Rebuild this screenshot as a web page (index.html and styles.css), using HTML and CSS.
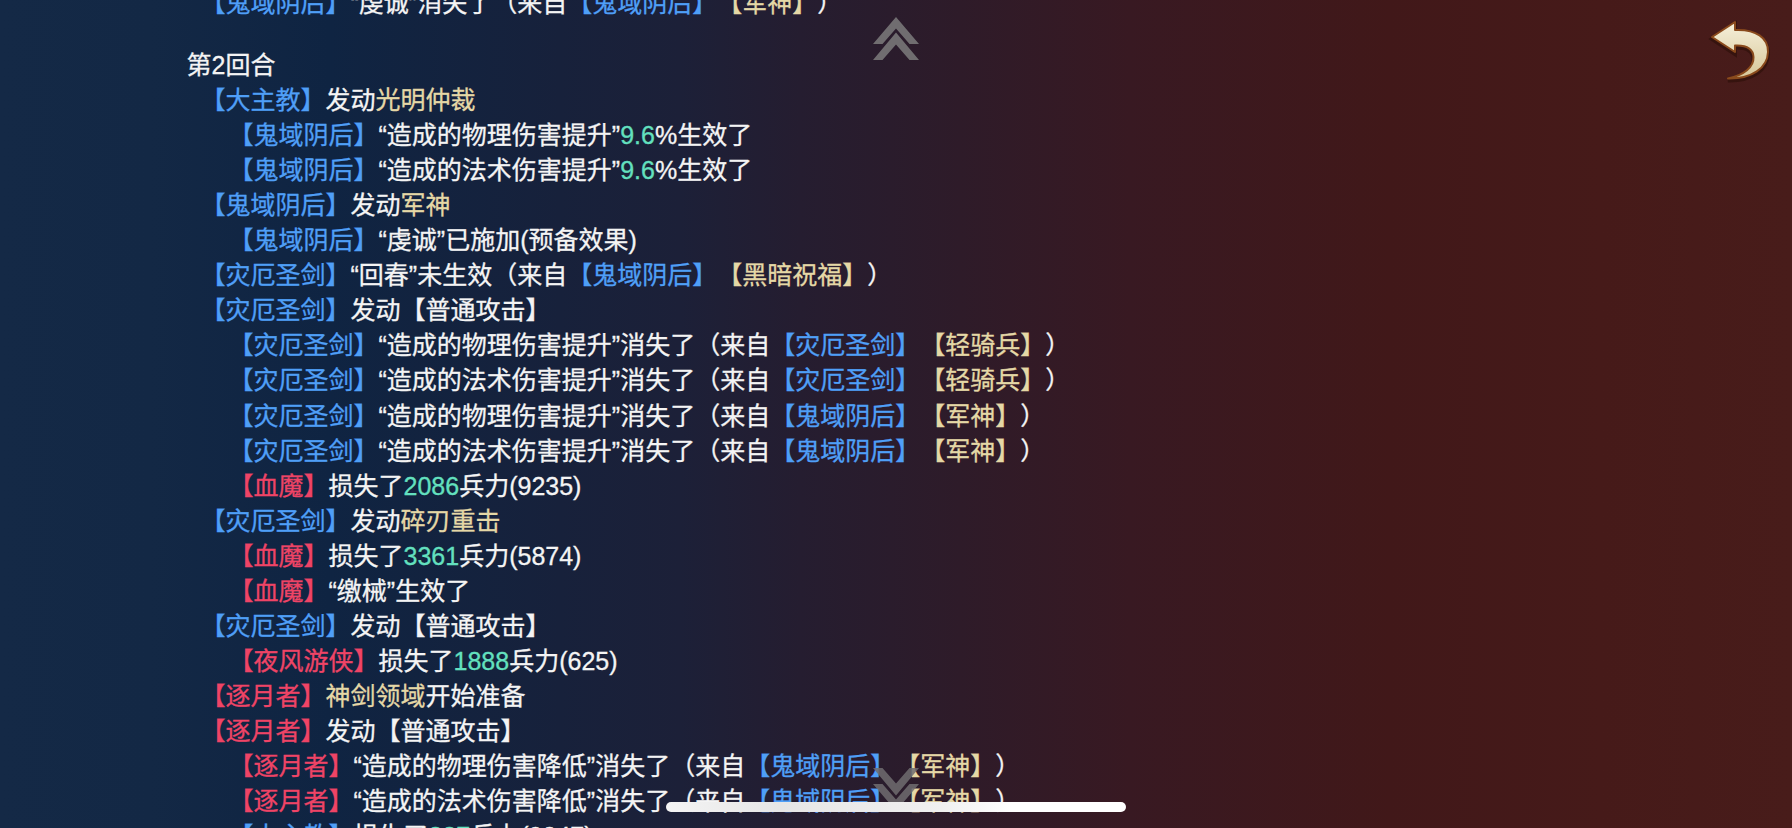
FILE: index.html
```html
<!DOCTYPE html>
<html lang="zh-CN">
<head>
  <meta charset="UTF-8" />
  <title>战报</title>
  <link rel="stylesheet" href="styles.css">
</head>
<body>

<div class="log">
  <p class="l1"><span class="ally">【鬼域阴后】</span>“虔诚”消失了（来自<span class="ally">【鬼域阴后】</span><span class="skill">【军神】</span>）</p>

  <p class="round">第2回合</p>
  <p class="l1"><span class="ally">【大主教】</span>发动<span class="skill">光明仲裁</span></p>
  <p class="l2"><span class="ally">【鬼域阴后】</span>“造成的物理伤害提升”<span class="num">9.6</span>%生效了</p>
  <p class="l2"><span class="ally">【鬼域阴后】</span>“造成的法术伤害提升”<span class="num">9.6</span>%生效了</p>
  <p class="l1"><span class="ally">【鬼域阴后】</span>发动<span class="skill">军神</span></p>
  <p class="l2"><span class="ally">【鬼域阴后】</span>“虔诚”已施加(预备效果)</p>
  <p class="l1"><span class="ally">【灾厄圣剑】</span>“回春”未生效（来自<span class="ally">【鬼域阴后】</span><span class="skill">【黑暗祝福】</span>）</p>
  <p class="l1"><span class="ally">【灾厄圣剑】</span>发动【普通攻击】</p>
  <p class="l2"><span class="ally">【灾厄圣剑】</span>“造成的物理伤害提升”消失了（来自<span class="ally">【灾厄圣剑】</span><span class="skill">【轻骑兵】</span>）</p>
  <p class="l2"><span class="ally">【灾厄圣剑】</span>“造成的法术伤害提升”消失了（来自<span class="ally">【灾厄圣剑】</span><span class="skill">【轻骑兵】</span>）</p>
  <p class="l2"><span class="ally">【灾厄圣剑】</span>“造成的物理伤害提升”消失了（来自<span class="ally">【鬼域阴后】</span><span class="skill">【军神】</span>）</p>
  <p class="l2"><span class="ally">【灾厄圣剑】</span>“造成的法术伤害提升”消失了（来自<span class="ally">【鬼域阴后】</span><span class="skill">【军神】</span>）</p>
  <p class="l2"><span class="enemy">【血魔】</span>损失了<span class="num">2086</span>兵力(9235)</p>
  <p class="l1"><span class="ally">【灾厄圣剑】</span>发动<span class="skill">碎刃重击</span></p>
  <p class="l2"><span class="enemy">【血魔】</span>损失了<span class="num">3361</span>兵力(5874)</p>
  <p class="l2"><span class="enemy">【血魔】</span>“缴械”生效了</p>
  <p class="l1"><span class="ally">【灾厄圣剑】</span>发动【普通攻击】</p>
  <p class="l2"><span class="enemy">【夜风游侠】</span>损失了<span class="num">1888</span>兵力(625)</p>
  <p class="l1"><span class="enemy">【逐月者】</span><span class="skill">神剑领域</span>开始准备</p>
  <p class="l1"><span class="enemy">【逐月者】</span>发动【普通攻击】</p>
  <p class="l2"><span class="enemy">【逐月者】</span>“造成的物理伤害降低”消失了（来自<span class="ally">【鬼域阴后】</span><span class="skill">【军神】</span>）</p>
  <p class="l2"><span class="enemy">【逐月者】</span>“造成的法术伤害降低”消失了（来自<span class="ally">【鬼域阴后】</span><span class="skill">【军神】</span>）</p>
  <p class="l2"><span class="ally">【大主教】</span>损失了<span class="num">887</span>兵力(9047)</p>
</div>

<!-- scroll hints -->
<svg class="scroll-up" width="46" height="43" viewBox="0 0 46 43">
  <path d="M23 0L46 27H36.500L23 11.500L9.500 27H0ZM23 15.500L46 43H36.500L23 27.500L9.500 43H0Z"/>
</svg>
<svg class="scroll-down" width="46" height="43" viewBox="0 0 46 43">
  <path d="M23 0L46 27H36.500L23 11.500L9.500 27H0ZM23 15.500L46 43H36.500L23 27.500L9.500 43H0Z"/>
</svg>

<!-- back button -->
<svg class="back" width="76" height="76" viewBox="0 0 76 76">
  <defs>
    <linearGradient id="gold" x1="0" y1="0" x2="0" y2="1">
      <stop offset="0" stop-color="#f6f0da"/>
      <stop offset="1" stop-color="#d6c698"/>
    </linearGradient>
  </defs>
  <path class="back-shadow" d="M12 27L35 12V20C56 19 68.500 28 68 42C67.500 58 52 69 28 68.500C44 65 54 57 53.500 47C53 38 46 35 35 35.500V42Z"/>
  <path class="back-arrow" d="M12 27L35 12V20C56 19 68.500 28 68 42C67.500 58 52 69 28 68.500C44 65 54 57 53.500 47C53 38 46 35 35 35.500V42Z"/>
</svg>

<div class="home-bar"></div>

</body>
</html>
```
FILE: styles.css
```css
body {
  margin: 0;
  height: 828px;
  position: relative;
  overflow: hidden;
  background: linear-gradient(to right, #142946 0, #132845 150px, #0f2442 330px, #17213b 560px, #1c2038 680px, #251d30 800px, #2e1b29 960px, #381922 1130px, #411819 1390px, #461a19 1600px, #481c1a 1792px);
  color: #f4f4f4;
  font-family: "Liberation Sans", "Noto Sans CJK SC", sans-serif;
  font-size: 25px;
}
.log {
  margin-top: -14px;
  padding-left: 186.5px;
  white-space: nowrap;
  text-spacing-trim: space-all;
  -webkit-text-stroke: 0.3px;
}
.log p {
  margin: 0;
  height: 35.05px;
  line-height: 35px;
}
.log .round {
  margin-top: 27px;
}
.l1 {
  padding-left: 14px;
}
.l2 {
  padding-left: 42px;
}
.ally {
  color: #4f9ff7;
}
.enemy {
  color: #ef4466;
}
.skill {
  color: #e5d8a6;
}
.num {
  color: #63e0bf;
}
.scroll-up,
.scroll-down {
  position: absolute;
  left: 873px;
  fill: #706d70;
}
.scroll-up {
  top: 17px;
}
.scroll-down {
  top: 768px;
  transform: scaleY(-1);
  opacity: 0.85;
}
.back {
  position: absolute;
  left: 1700px;
  top: 10px;
}
.back-shadow {
  fill: #2b0f08;
  stroke: #2b0f08;
  stroke-width: 4;
  opacity: 0.6;
  transform: translateY(2px);
}
.back-arrow {
  fill: url(#gold);
  stroke: #8a4a1c;
  stroke-width: 2;
  stroke-linejoin: round;
}
.home-bar {
  position: absolute;
  left: 666px;
  top: 802px;
  width: 460px;
  height: 10px;
  border-radius: 5px;
  background: linear-gradient(to right, #f4f4f4, #e6e6e6 25%, #f0f0f0 60%, #fff 75%);
}
```
